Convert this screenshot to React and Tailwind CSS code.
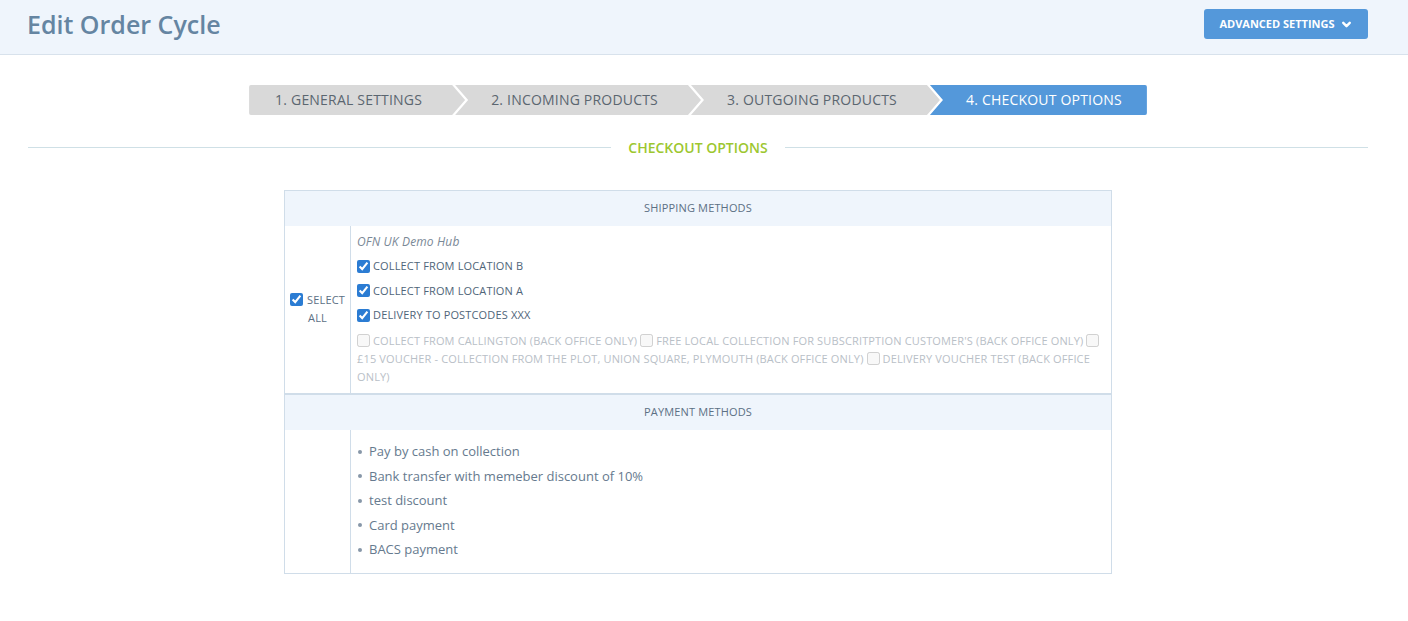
import React from 'react';
import { ChevronDown } from 'lucide-react';

const steps = [
    '1. General Settings',
    '2. Incoming Products',
    '3. Outgoing Products',
    '4. Checkout Options',
];

const clipFirst = '[clip-path:polygon(0_0,calc(100%-13px)_0,100%_50%,calc(100%-13px)_100%,0_100%)]';
const clipMiddle = '[clip-path:polygon(0_0,calc(100%-13px)_0,100%_50%,calc(100%-13px)_100%,0_100%,13px_50%)]';
const clipLast = '[clip-path:polygon(0_0,100%_0,100%_100%,0_100%,13px_50%)]';

const shippingChecked = [
    'Collect from Location B',
    'Collect from Location A',
    'Delivery to Postcodes XXX',
];

const shippingDisabled = [
    'Collect from Callington (back office only)',
    "Free local collection for subscritption customer's (back office only)",
    '£15 voucher - collection from The Plot, Union Square, Plymouth (back office only)',
    'Delivery voucher test (back office only)',
];

const paymentMethods = [
    'Pay by cash on collection',
    'Bank transfer with memeber discount of 10%',
    'test discount',
    'Card payment',
    'BACS payment',
];

function StepBar() {
    return (
        <div className="flex justify-center mt-[30px]">
            {steps.map((step, i) => {
                const first = i === 0;
                const last = i === steps.length - 1;
                const clip = first ? clipFirst : last ? clipLast : clipMiddle;
                const active = last;
                return (
                    <div
                        key={step}
                        className={`${clip} h-[30px] flex items-center text-[14px] tracking-[0.2px] uppercase whitespace-nowrap ${
                            first ? 'pl-[26px] rounded-l-[2px]' : 'pl-[36px] ml-[-10px]'
                        } ${last ? 'pr-[25px] rounded-r-[2px]' : 'pr-[43px]'} ${
                            active ? 'bg-[#5498da] text-white' : 'bg-[#d9d9d9] text-[#5b6670]'
                        }`}
                    >
                        <span className="-mt-[2px]">{step}</span>
                    </div>
                );
            })}
        </div>
    );
}

export default function App() {
    return (
        <div className="min-h-[621px] bg-white font-['Open_Sans',sans-serif]">
            <div className="h-[55px] bg-[#eff5fc] border-b border-[#d8e2ec] flex items-center justify-between pl-[27px] pr-[40px]">
                <h1 className="text-[25px] font-semibold text-[#6585a2] leading-none -mt-[6px]">Edit Order Cycle</h1>
                <button className="h-[30px] w-[164px] -mt-[6px] bg-[#5498da] rounded-[3px] text-white text-[11px] font-bold uppercase flex items-center justify-center gap-[5px]">
                    Advanced Settings
                    <ChevronDown size={13} strokeWidth={4.5} />
                </button>
            </div>

            <div className="pl-[28px] pr-[40px]">
                <StepBar />

                <div className="flex items-center mt-[22px]">
                    <div className="flex-1 h-px bg-[#cfe0e6]" />
                    <span className="px-[17px] text-[14px] font-semibold text-[#9dc72f] uppercase">Checkout Options</span>
                    <div className="flex-1 h-px bg-[#cfe0e6]" />
                </div>

                <div className="flex justify-center mt-[32px]">
                    <table className="w-[828px] border-collapse border border-[#d0dde9] text-[11px] tracking-[0.15px]">
                        <tbody>
                            <tr>
                                <th colSpan={2} className="h-[35px] bg-[#eff5fc] text-[#5c7084] font-normal uppercase text-center">
                                    Shipping Methods
                                </th>
                            </tr>
                            <tr>
                                <td className="w-[66px] border-r border-[#d0dde9] text-center align-middle text-[#5c7084] uppercase leading-[18px] px-[2px]">
                                    <label>
                                        <input type="checkbox" defaultChecked className="accent-[#2b7cd3] align-[-2px] mr-[4px]" />
                                        Select all
                                    </label>
                                </td>
                                <td className="pt-[4px] pb-[7px] px-[6px] text-[#4f6579]">
                                    <div className="h-[24.5px] flex items-center italic text-[12px] text-[#7a8896]">OFN UK Demo Hub</div>
                                    {shippingChecked.map(name => (
                                        <div key={name} className="h-[24.5px] flex items-center uppercase">
                                            <input type="checkbox" defaultChecked className="accent-[#2b7cd3] m-0 mr-[3px] w-[13px] h-[13px]" />
                                            {name}
                                        </div>
                                    ))}
                                    <div className="mt-[4px] uppercase leading-[18px] text-[#b9c0c7]">
                                        {shippingDisabled.map(name => (
                                            <span key={name}>
                                                <input type="checkbox" disabled className="m-0 mr-[3px] w-[13px] h-[13px] align-[-2px]" />
                                                {name}{' '}
                                            </span>
                                        ))}
                                    </div>
                                </td>
                            </tr>
                            <tr>
                                <th colSpan={2} className="h-[36px] bg-[#eff5fc] border-t-2 border-[#d0dde9] text-[#5c7084] font-normal uppercase text-center">
                                    Payment Methods
                                </th>
                            </tr>
                            <tr>
                                <td className="border-r border-[#d0dde9]" />
                                <td className="pt-[10px] pb-[11px] pl-[6px]">
                                    <ul className="text-[13px] tracking-normal text-[#667a8e]">
                                        {paymentMethods.map(name => (
                                            <li key={name} className="h-[24.5px] flex items-center">
                                                <span className="w-[4px] h-[4px] rounded-full bg-[#8797a8] ml-[1px] mr-[7px]" />
                                                {name}
                                            </li>
                                        ))}
                                    </ul>
                                </td>
                            </tr>
                        </tbody>
                    </table>
                </div>
            </div>
        </div>
    );
}
